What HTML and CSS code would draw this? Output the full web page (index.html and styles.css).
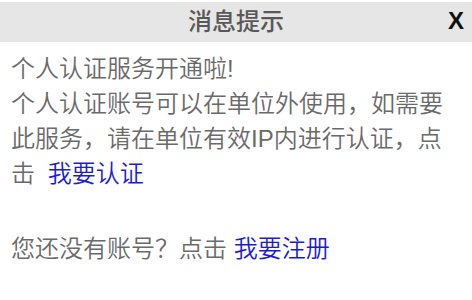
FILE: index.html
```html
<!DOCTYPE html>
<html lang="zh-CN">
<head>
<meta charset="utf-8">
<link rel="stylesheet" href="styles.css">
</head>
<body>
<div class="dialog">
  <div class="header">
    <span class="title">消息提示</span>
    <span class="close">X</span>
  </div>
  <div class="content">
    <p class="para">个人认证服务开通啦!<br>个人认证账号可以在单位外使用，如需要此服务，请在单位有效IP内进行认证，点击 <a class="link link-gap">我要认证</a></p>
    <p class="para para-second">您还没有账号？点击 <a class="link">我要注册</a></p>
  </div>
</div>
</body>
</html>
```
FILE: styles.css
```css
html, body {
  margin: 0;
  padding: 0;
  background: #ffffff;
}
body {
  padding-top: 2px;
  font-family: "Liberation Sans", "Noto Sans CJK SC", sans-serif;
}
.dialog {
  width: 472px;
}
.header {
  height: 40px;
  background: #e6e6e6;
  display: flex;
  align-items: center;
  justify-content: center;
  position: relative;
}
.title {
  font-size: 24px;
  font-weight: 500;
  color: #585858;
  line-height: 40px;
}
.close {
  position: absolute;
  right: 8px;
  top: 0;
  line-height: 38px;
  font-family: "Liberation Sans", Arial, sans-serif;
  font-weight: bold;
  font-size: 24px;
  color: #111111;
}
.content {
  padding: 0 11px;
  width: 450px;
  box-sizing: content-box;
}
.para {
  margin: 0;
  font-size: 24px;
  line-height: 35px;
  color: #6a6a6a;
  font-weight: 350;
}
.para:first-child {
  margin-top: 9px;
}
.para-second {
  margin-top: 40px;
}
.link {
  color: #1c1cd6;
  text-decoration: none;
}
.link-gap {
  margin-left: 6px;
}
```
